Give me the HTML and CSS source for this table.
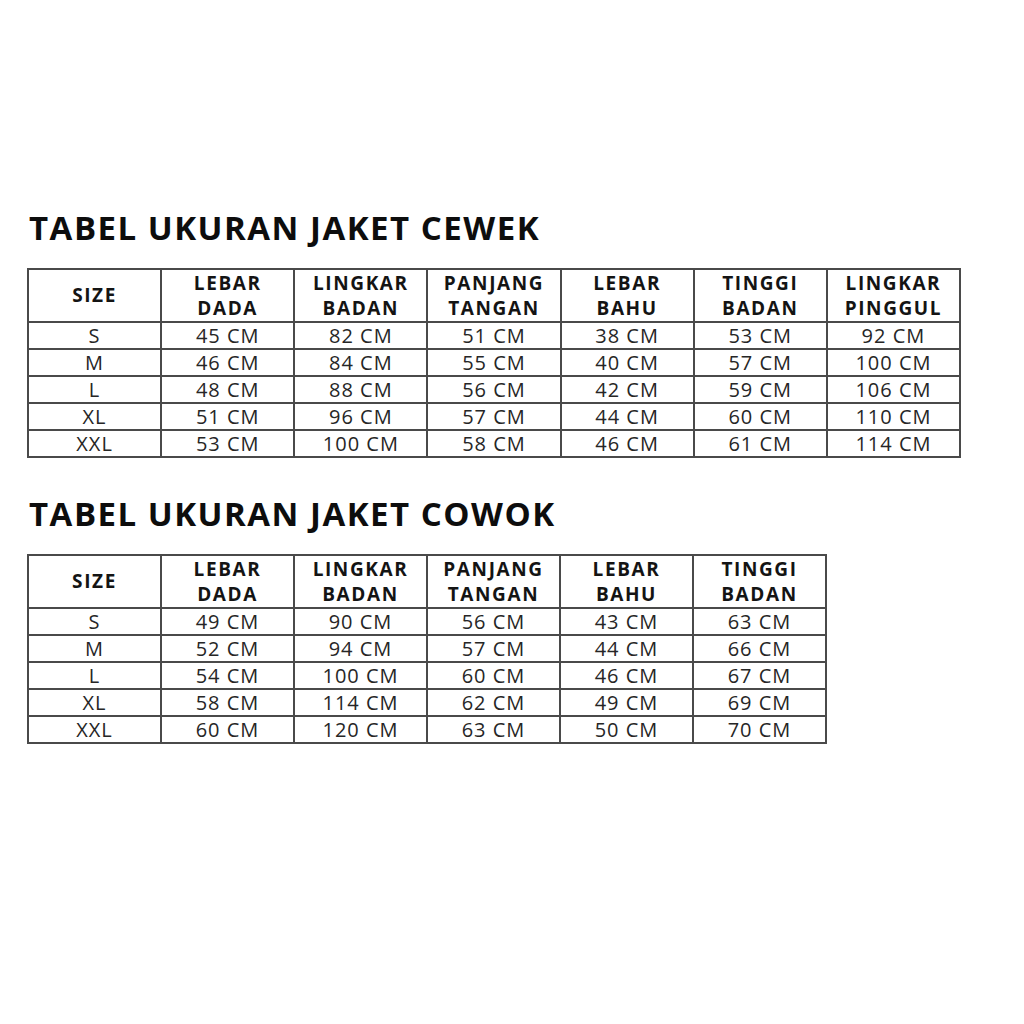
FILE: index.html
```html
<!DOCTYPE html>
<html>
<head>
<meta charset="utf-8">
<link rel="stylesheet" href="styles.css">
</head>
<body>
<main class="page">
  <section class="block">
    <h1 class="title">TABEL UKURAN JAKET CEWEK</h1>
    <table class="size-table seven">
      <thead>
        <tr>
          <th>SIZE</th>
          <th>LEBAR<br>DADA</th>
          <th>LINGKAR<br>BADAN</th>
          <th>PANJANG<br>TANGAN</th>
          <th>LEBAR<br>BAHU</th>
          <th>TINGGI<br>BADAN</th>
          <th>LINGKAR<br>PINGGUL</th>
        </tr>
      </thead>
      <tbody>
        <tr><td>S</td><td>45 CM</td><td>82 CM</td><td>51 CM</td><td>38 CM</td><td>53 CM</td><td>92 CM</td></tr>
        <tr><td>M</td><td>46 CM</td><td>84 CM</td><td>55 CM</td><td>40 CM</td><td>57 CM</td><td>100 CM</td></tr>
        <tr><td>L</td><td>48 CM</td><td>88 CM</td><td>56 CM</td><td>42 CM</td><td>59 CM</td><td>106 CM</td></tr>
        <tr><td>XL</td><td>51 CM</td><td>96 CM</td><td>57 CM</td><td>44 CM</td><td>60 CM</td><td>110 CM</td></tr>
        <tr><td>XXL</td><td>53 CM</td><td>100 CM</td><td>58 CM</td><td>46 CM</td><td>61 CM</td><td>114 CM</td></tr>
      </tbody>
    </table>
  </section>
  <section class="block second">
    <h1 class="title">TABEL UKURAN JAKET COWOK</h1>
    <table class="size-table six">
      <thead>
        <tr>
          <th>SIZE</th>
          <th>LEBAR<br>DADA</th>
          <th>LINGKAR<br>BADAN</th>
          <th>PANJANG<br>TANGAN</th>
          <th>LEBAR<br>BAHU</th>
          <th>TINGGI<br>BADAN</th>
        </tr>
      </thead>
      <tbody>
        <tr><td>S</td><td>49 CM</td><td>90 CM</td><td>56 CM</td><td>43 CM</td><td>63 CM</td></tr>
        <tr><td>M</td><td>52 CM</td><td>94 CM</td><td>57 CM</td><td>44 CM</td><td>66 CM</td></tr>
        <tr><td>L</td><td>54 CM</td><td>100 CM</td><td>60 CM</td><td>46 CM</td><td>67 CM</td></tr>
        <tr><td>XL</td><td>58 CM</td><td>114 CM</td><td>62 CM</td><td>49 CM</td><td>69 CM</td></tr>
        <tr><td>XXL</td><td>60 CM</td><td>120 CM</td><td>63 CM</td><td>50 CM</td><td>70 CM</td></tr>
      </tbody>
    </table>
  </section>
</main>
</body>
</html>
```
FILE: styles.css
```css
html, body {
  margin: 0;
  padding: 0;
  background: #ffffff;
}
body {
  font-family: "Open Sans", "Liberation Sans", sans-serif;
  color: #1a1a1a;
}
.page {
  padding: 207px 0 0 27px;
}
.block.second {
  margin-top: 35px;
}
.title {
  margin: 0 0 20px 2px;
  font-size: 33px;
  line-height: 41px;
  font-weight: 700;
  letter-spacing: 1.5px;
  color: #0d0d0d;
}
.size-table {
  border-collapse: collapse;
  table-layout: fixed;
  border: 2px solid #4a4a4a;
}
.size-table.seven { width: 934px; }
.size-table.six { width: 800px; }
.size-table th,
.size-table td {
  border: 2px solid #4a4a4a;
  text-align: center;
  padding: 0;
}
.size-table th {
  height: 51px;
  font-size: 19px;
  line-height: 25px;
  font-weight: 700;
  letter-spacing: 1.6px;
  color: #141414;
}
.size-table td {
  height: 25px;
  font-size: 20px;
  line-height: 25px;
  font-weight: 400;
  letter-spacing: 1px;
  color: #262626;
}
```
